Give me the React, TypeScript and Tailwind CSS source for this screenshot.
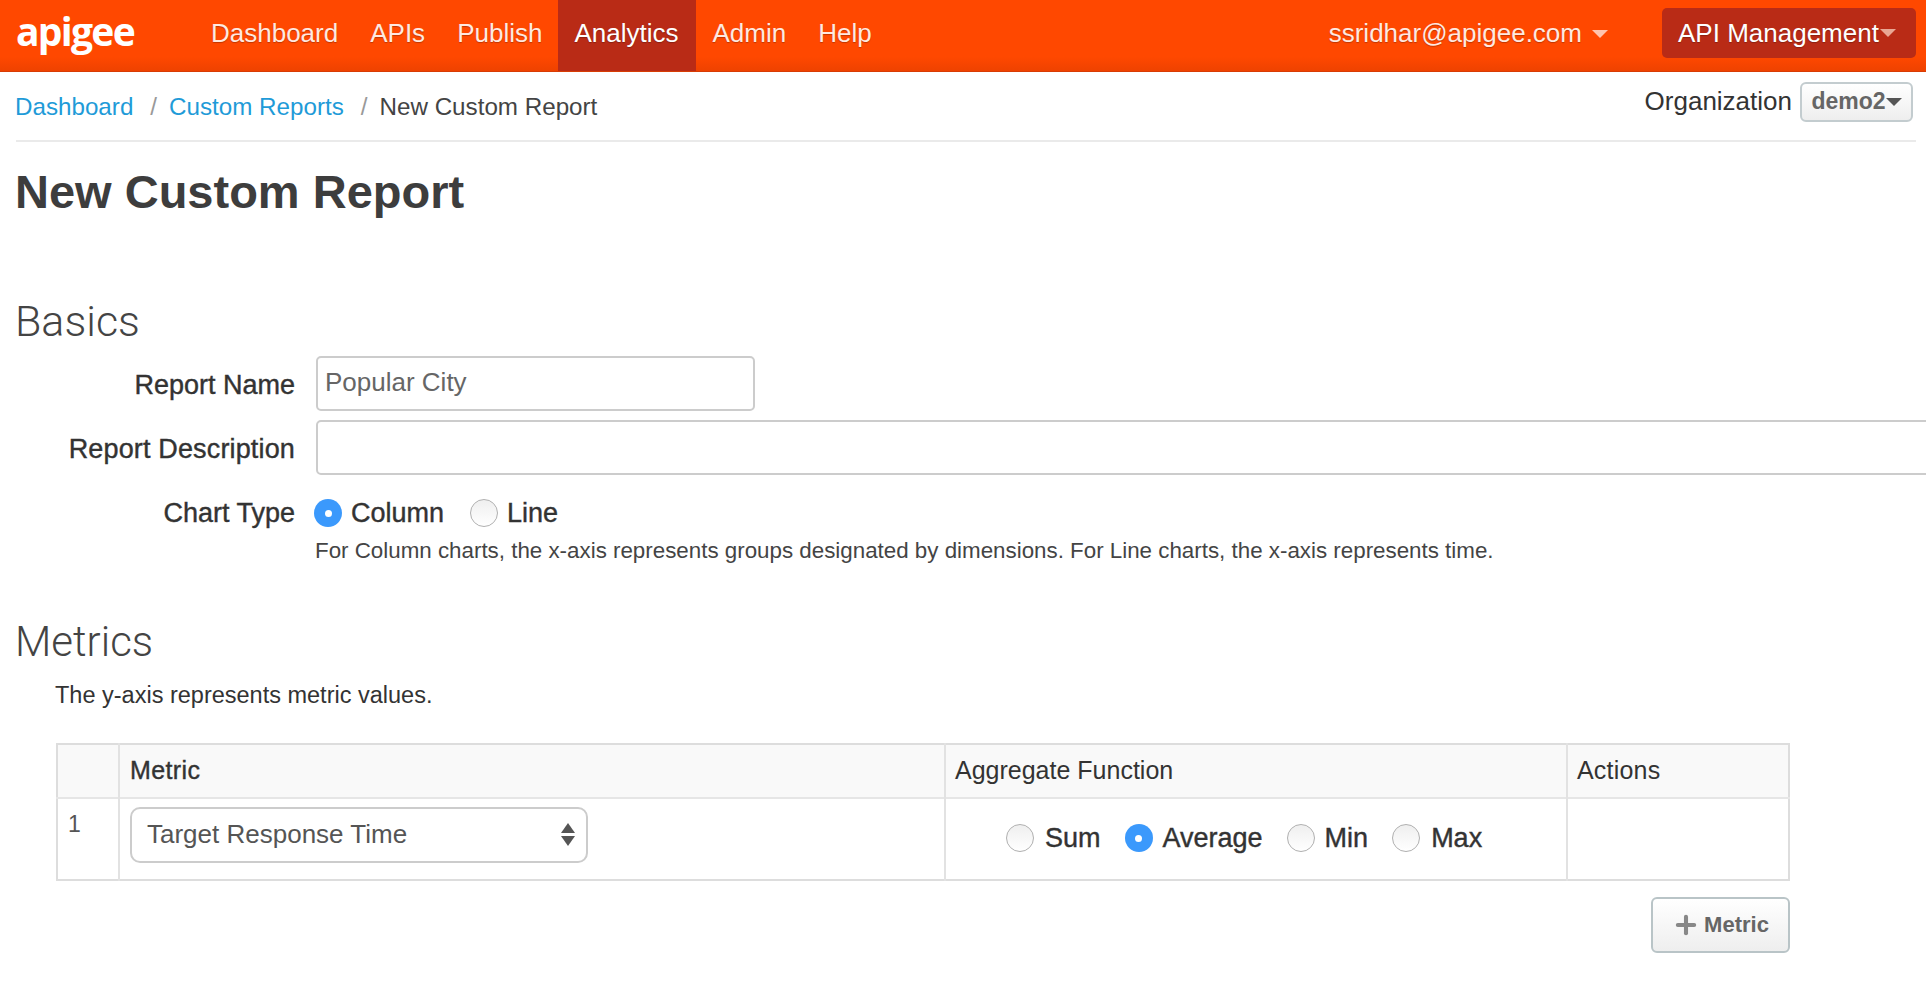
import { Plus } from 'lucide-react';

const NAV = ['Dashboard', 'APIs', 'Publish', 'Analytics', 'Admin', 'Help'];

function Radio({ label, checked, gap }: { label: string; checked?: boolean; gap: string }) {
    return (
        <label className={`flex items-center text-[27px] text-[#333] [-webkit-text-stroke:0.4px_#333] ${gap}`}>
            {checked ? (
                <span className="flex h-[28px] w-[28px] items-center justify-center rounded-full bg-[#3b99fc]">
                    <span className="h-[7px] w-[7px] rounded-full bg-white"></span>
                </span>
            ) : (
                <span className="h-[28px] w-[28px] rounded-full border border-[#b0b0b0] bg-gradient-to-b from-[#efefef] to-white"></span>
            )}
            {label}
        </label>
    );
}

function Caret({ className }: { className: string }) {
    return <span className={`inline-block h-0 w-0 border-x-[8px] border-t-[8px] border-x-transparent ${className}`}></span>;
}

export default function App() {
    return (
        <div className="h-[982px] w-[1926px] overflow-hidden bg-white font-['Liberation_Sans',Arial,sans-serif] text-[26px] text-[#333]">
            {/* Top nav */}
            <div className="flex h-[72px] items-stretch justify-between border-b border-[#d83c05] bg-gradient-to-b from-[#ff4800] from-80% to-[#ee4200] pl-[16px] pr-[10px] text-white [text-shadow:0_1px_1px_rgba(0,0,0,0.25)]">
                <div className="flex items-stretch">
                    <span className="mt-[7px] w-[179px] font-['Open_Sans',sans-serif] text-[39px] leading-[48px] font-bold tracking-[-1.7px] [text-shadow:none]">apigee</span>
                    <div className="flex items-stretch">
                        {NAV.map((item) => (
                            <a
                                key={item}
                                className={`flex items-center pb-[5px] pl-[16px] ${item === 'Analytics' ? 'bg-[#b92b16] pr-[18px] text-white' : 'pr-[16px] text-[#ffe9e0]'}`}
                            >
                                {item}
                            </a>
                        ))}
                    </div>
                </div>
                <div className="flex items-center">
                    <span className="pb-[5px] text-[#ffe9e0]">ssridhar@apigee.com</span>
                    <Caret className="ml-[10px] mb-[4px] border-t-[#ffc4ad]" />
                    <div className="ml-[54px] mb-[5px] flex h-[50px] w-[254px] items-center rounded-[5px] bg-[#b92b16] pl-[16px]">
                        API Management
                        <Caret className="ml-[1px] border-t-[#e9a794]" />
                    </div>
                </div>
            </div>

            <div className="pl-[16px] pr-[10px]">
                {/* Breadcrumb */}
                <div className="flex h-[70px] items-center justify-between border-b-2 border-[#eaeaea]">
                    <div className="mt-[2px] ml-[-1px] flex items-center text-[24.2px]">
                        <a className="text-[#1f9bd8]">Dashboard</a>
                        <span className="ml-[17px] mr-[12px] text-[#999]">/</span>
                        <a className="text-[#1f9bd8]">Custom Reports</a>
                        <span className="ml-[17px] mr-[12px] text-[#999]">/</span>
                        <span className="text-[#444]">New Custom Report</span>
                    </div>
                    <div className="mb-[9px] mr-[3px] flex items-center gap-[8px]">
                        <span>Organization</span>
                        <div className="flex h-[40px] w-[113px] items-center justify-center rounded-[6px] border-2 border-[#c3cccf] bg-gradient-to-b from-white to-[#eeeeee] text-[23px] font-bold text-[#666]">
                            demo2
                            <Caret className="border-t-[#555]" />
                        </div>
                    </div>
                </div>

                <h1 className="mt-[22px] ml-[-1px] text-[47px] leading-[56px] font-bold text-[#3d3d3d]">New Custom Report</h1>

                {/* Basics */}
                <h2 className="mt-[76px] ml-[-1px] font-['Roboto',sans-serif] text-[43px] leading-[50px] font-light text-[#444]">Basics</h2>
                <div className="mt-[10px] flex items-center">
                    <div className="w-[279px] pt-[3px] text-right text-[27px] [-webkit-text-stroke:0.4px_#333]">Report Name</div>
                    <div className="ml-[21px] flex h-[55px] w-[439px] items-center rounded-[5px] border-2 border-[#ccc] pb-[3px] pl-[7px] text-[#666]">Popular City</div>
                </div>
                <div className="mt-[9px] flex items-center">
                    <div className="w-[279px] shrink-0 pt-[3px] text-right text-[27px] tracking-[0.15px] [-webkit-text-stroke:0.4px_#333]">Report Description</div>
                    <div className="ml-[21px] h-[55px] w-[1700px] shrink-0 rounded-[5px] border-2 border-[#ccc]"></div>
                </div>
                <div className="mt-[18px] flex items-center">
                    <div className="w-[279px] text-right text-[27px] [-webkit-text-stroke:0.4px_#333]">Chart Type</div>
                    <div className="ml-[19px] flex gap-[26px]">
                        <Radio label="Column" checked gap="gap-[9px]" />
                        <Radio label="Line" gap="gap-[9px]" />
                    </div>
                </div>
                <p className="mt-[2px] ml-[299px] text-[22.35px] leading-[30px] text-[#444]">
                    For Column charts, the x-axis represents groups designated by dimensions. For Line charts, the x-axis represents time.
                </p>

                {/* Metrics */}
                <h2 className="mt-[51px] ml-[-1px] font-['Roboto',sans-serif] text-[42px] leading-[50px] font-light text-[#444]">Metrics</h2>
                <p className="mt-[10px] ml-[39px] text-[23.5px] leading-[36px] text-[#333]">The y-axis represents metric values.</p>

                <table className="mt-[30px] ml-[40px] w-[1734px] table-fixed border-collapse border-2 border-[#ddd]">
                    <thead>
                        <tr className="h-[54px] border-b-2 border-[#e6e6e6] bg-[#f9f9f9] text-left text-[25px]">
                            <th className="w-[62px] border-r-2 border-[#e2e2e2]"></th>
                            <th className="w-[826px] border-r-2 border-[#e2e2e2] pl-[10px] font-normal tracking-[0.4px] [-webkit-text-stroke:0.4px_#333]">Metric</th>
                            <th className="w-[622px] border-r-2 border-[#e2e2e2] pl-[9px] font-normal">Aggregate Function</th>
                            <th className="pl-[9px] font-normal tracking-[0.2px]">Actions</th>
                        </tr>
                    </thead>
                    <tbody>
                        <tr className="h-[82px]">
                            <td className="border-r-2 border-[#e2e2e2] pl-[10px] pt-[8px] align-top text-[23px] text-[#555]">1</td>
                            <td className="border-r-2 border-[#e2e2e2] pl-[10px] align-top">
                                <div className="mt-[8px] flex h-[56px] w-[458px] items-center justify-between rounded-[10px] border-2 border-[#ccc] pl-[15px] pr-[11px] text-[#555]">
                                    Target Response Time
                                    <span className="flex flex-col gap-[3px]">
                                        <span className="h-0 w-0 border-x-[7px] border-b-[10px] border-x-transparent border-b-[#555]"></span>
                                        <span className="h-0 w-0 border-x-[7px] border-t-[10px] border-x-transparent border-t-[#555]"></span>
                                    </span>
                                </div>
                            </td>
                            <td className="border-r-2 border-[#e2e2e2] pb-[1px]">
                                <div className="ml-[60px] flex gap-[24px]">
                                    <Radio label="Sum" gap="gap-[11px]" />
                                    <Radio label="Average" checked gap="gap-[10px]" />
                                    <Radio label="Min" gap="gap-[10px]" />
                                    <Radio label="Max" gap="gap-[11px]" />
                                </div>
                            </td>
                            <td></td>
                        </tr>
                    </tbody>
                </table>

                <div className="ml-[40px] flex w-[1734px] justify-end">
                    <button className="mt-[16px] flex h-[56px] w-[139px] items-center justify-center gap-[4px] rounded-[6px] border-2 border-[#b9c4c7] bg-gradient-to-b from-white to-[#eeeeee] text-[22px] font-bold text-[#666]">
                        <Plus size={28} strokeWidth={3.5} className="text-[#888]" />
                        Metric
                    </button>
                </div>
            </div>
        </div>
    );
}
